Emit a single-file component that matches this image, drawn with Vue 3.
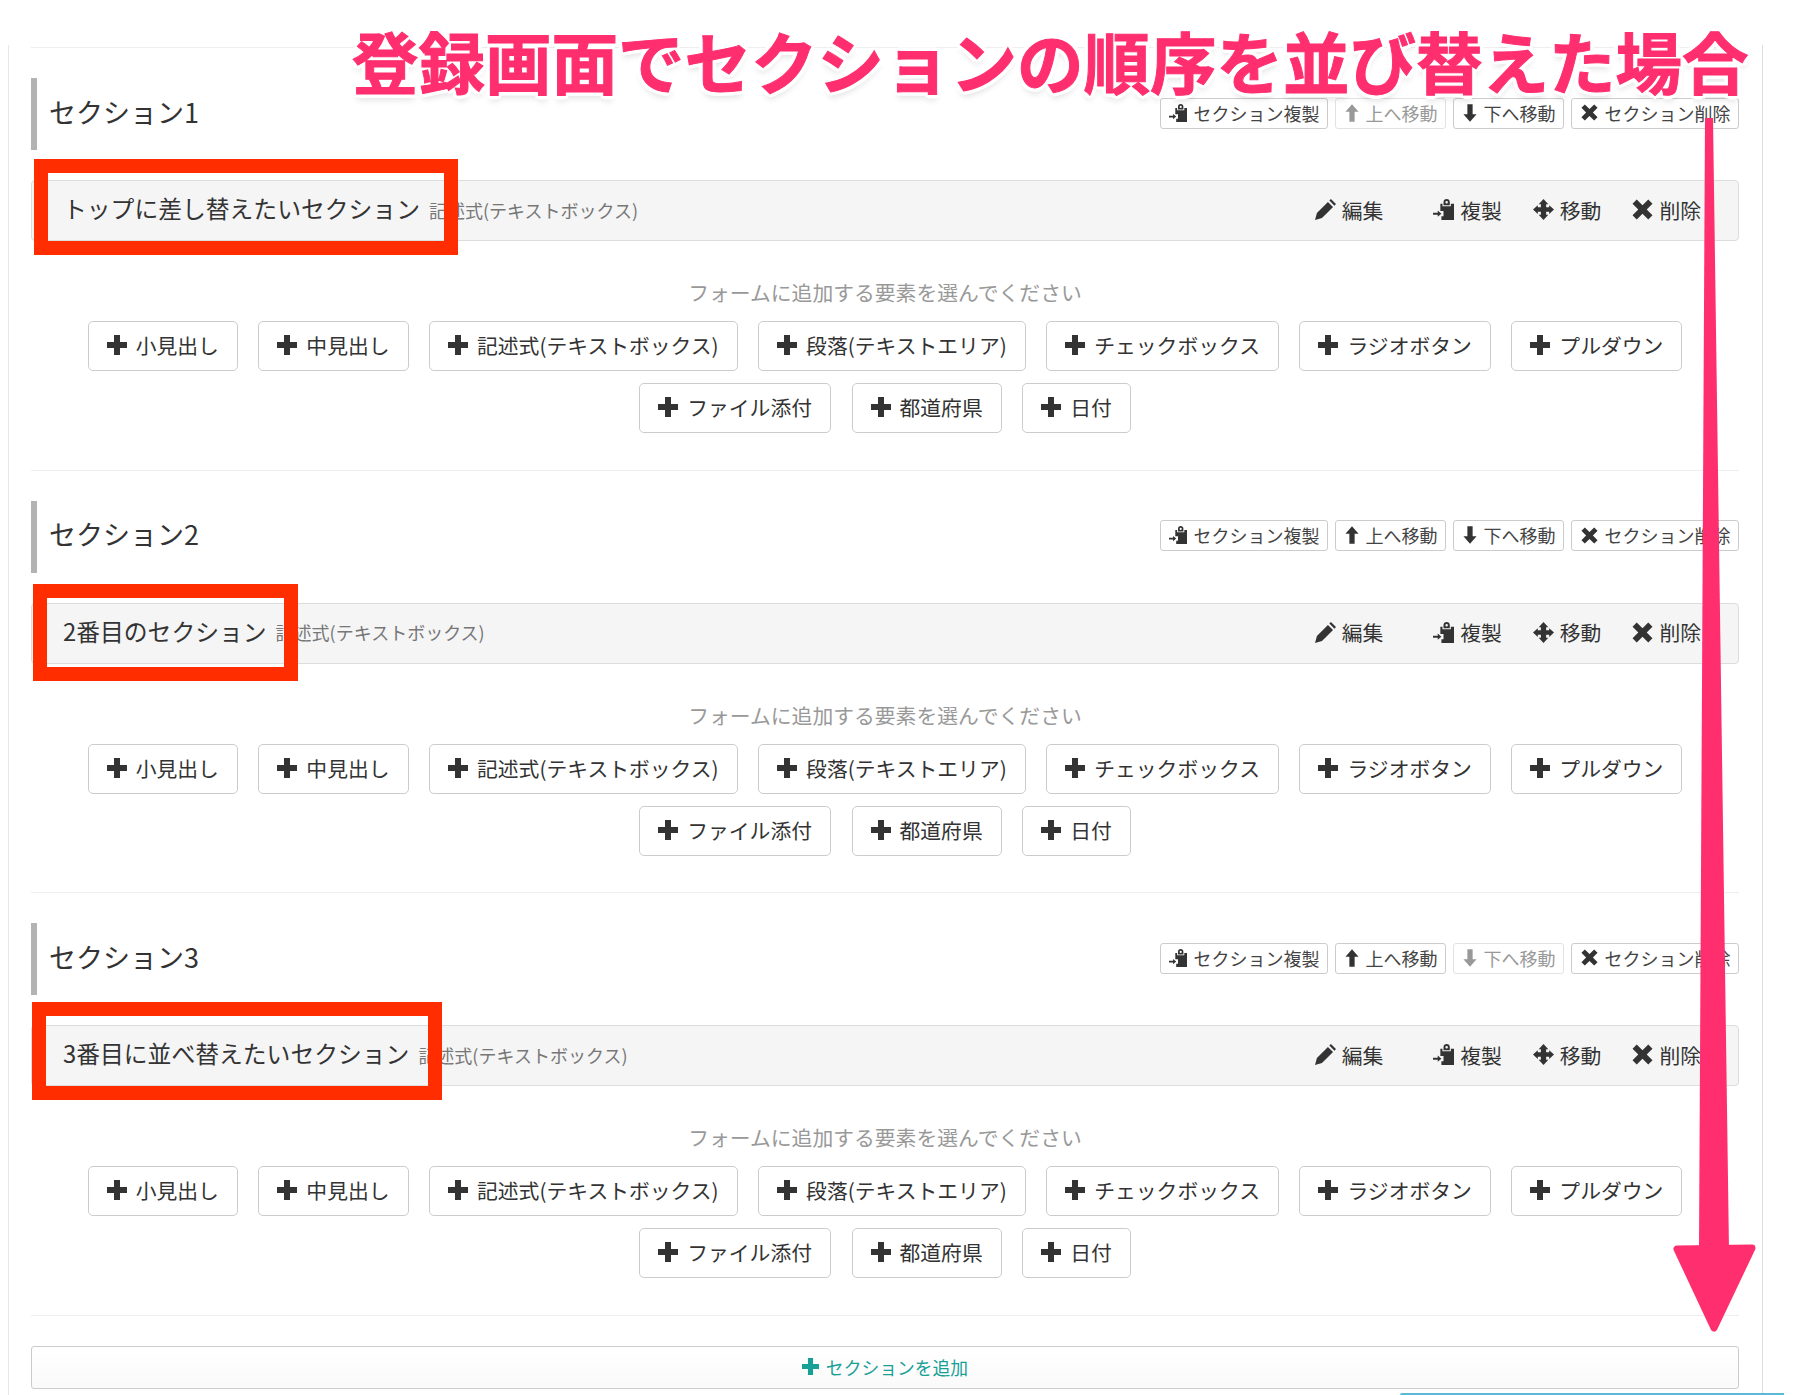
<script setup>
const icons = {
  plus: { box: "0 0 20 20", d: "M7 0h6v7h7v6h-7v7H7v-7H0V7h7z" },
  pencil: { box: "0 0 24 24", d: "M0 24l2.2-8L14.8 3.4l5.8 5.8L8 21.8zM16.4 1.8L18.2 0 24 5.8l-1.8 1.8z" },
  paste: {
    box: "0 0 20 20",
    d: "M7 4.500h2V7h8V4.500h3V20H8v-3.500h2v-5H7zM10 3c0-2 1.200-3 3-3s3 1 3 3v3h-6zM11.800 3.200a1.200 1.200 0 1 0 2.400 0a1.200 1.200 0 1 0-2.400 0zM0 13h4.500v-2l3.500 3-3.500 3v-2H0z",
  },
  move: {
    box: "0 0 24 24",
    d: "M12 0l5.500 6H15v3.500h3.500V7l5.500 5-5.500 5v-2.500H15V18h2.500L12 24l-5.500-6H9v-3.500H5.500V17L0 12l5.500-5v2.500H9V6H6.500z",
  },
  remove: { box: "0 0 20 20", d: "M4.500.5L10 6l5.500-5.500 4 4L14 10l5.500 5.500-4 4L10 14l-5.500 5.500-4-4L6 10 .5 4.500z" },
  up: { box: "0 0 16 20", d: "M8 0l7.500 8.500H11V20H5V8.500H.5z" },
  down: { box: "0 0 16 20", d: "M5 0h6v11.500h4.500L8 20 .5 11.500H5z" },
};

// セクションごとの内容
const sections = [
  { name: "セクション1", field: "トップに差し替えたいセクション", upOff: true, downOff: false },
  { name: "セクション2", field: "2番目のセクション", upOff: false, downOff: false },
  { name: "セクション3", field: "3番目に並べ替えたいセクション", upOff: false, downOff: true },
];

const addButtons = [
  "小見出し",
  "中見出し",
  "記述式(テキストボックス)",
  "段落(テキストエリア)",
  "チェックボックス",
  "ラジオボタン",
  "プルダウン",
  "ファイル添付",
  "都道府県",
  "日付",
];

const rowActions = [
  { label: "編集", icon: "pencil", cls: "edit" },
  { label: "複製", icon: "paste", cls: "" },
  { label: "移動", icon: "move", cls: "" },
  { label: "削除", icon: "remove", cls: "" },
];
</script>

<template>
  <div class="page">
    <div class="panel">
      <section v-for="sec in sections" :key="sec.name" class="section">
        <div class="sec-head">
          <h2 class="sec-title">{{ sec.name }}</h2>
          <div class="sec-btns">
            <button class="mini">
              <svg class="ic ic-paste" :viewBox="icons.paste.box"><path :d="icons.paste.d" fill-rule="evenodd" /></svg>
              セクション複製
            </button>
            <button class="mini" :class="{ off: sec.upOff }">
              <svg class="ic ic-arrow" :viewBox="icons.up.box"><path :d="icons.up.d" /></svg>
              上へ移動
            </button>
            <button class="mini" :class="{ off: sec.downOff }">
              <svg class="ic ic-arrow" :viewBox="icons.down.box"><path :d="icons.down.d" /></svg>
              下へ移動
            </button>
            <button class="mini">
              <svg class="ic ic-x" :viewBox="icons.remove.box"><path :d="icons.remove.d" /></svg>
              セクション削除
            </button>
          </div>
        </div>

        <div class="field-row">
          <span class="field-name">{{ sec.field }}</span>
          <span class="field-type">記述式(テキストボックス)</span>
          <div class="row-actions">
            <span v-for="act in rowActions" :key="act.label" class="act" :class="act.cls">
              <svg class="act-ic" :viewBox="icons[act.icon].box"><path :d="icons[act.icon].d" fill-rule="evenodd" /></svg>
              {{ act.label }}
            </span>
          </div>
        </div>

        <p class="prompt">フォームに追加する要素を選んでください</p>
        <div class="add-btns">
          <button v-for="label in addButtons" :key="label" class="add">
            <svg class="plus" :viewBox="icons.plus.box"><path :d="icons.plus.d" /></svg>
            {{ label }}
          </button>
        </div>
      </section>

      <button class="add-section">
        <svg class="plus-teal" :viewBox="icons.plus.box"><path :d="icons.plus.d" /></svg>
        セクションを追加
      </button>
    </div>

    <!-- 注釈 -->
    <div class="note-title">登録画面でセクションの順序を並び替えた場合</div>
    <div class="red-box box1"></div>
    <div class="red-box box2"></div>
    <div class="red-box box3"></div>
    <svg class="arrow" viewBox="0 0 90 1230">
      <path d="M35 8L43 8L59 1140L29 1140Z" />
      <path class="arrow-head" d="M7 1139L82 1138L44 1218Z" />
    </svg>
    <div class="bottom-strip"></div>
  </div>
</template>

<style>
html,
body {
  margin: 0;
  background: #fff;
}
</style>

<style scoped>
.page {
  position: relative;
  width: 1812px;
  height: 1395px;
  overflow: hidden;
  background: #fff;
  font-family: "Noto Sans CJK JP", "Liberation Sans", sans-serif;
  color: #333;
}

.panel {
  box-sizing: border-box;
  width: 1755px;
  height: 1395px;
  margin-left: 8px;
  padding: 2px 23px 0 22px;
  position: relative;
  top: 45px;
  border-left: 1px solid #e8e8e8;
  border-right: 1px solid #ddd;
}

.section {
  padding: 30px 0 36.5px;
  border-bottom: 1px solid #eee;
}
.section:first-child {
  border-top: 1px solid #eee;
}

.sec-head {
  display: flex;
  align-items: center;
  justify-content: space-between;
  height: 72px;
  border-left: 6px solid #b3b3b3;
  padding-left: 12px;
}
.sec-title {
  margin: 0;
  padding-bottom: 6px;
  font-size: 27px;
  font-weight: 400;
  color: #333;
}
.sec-btns {
  display: flex;
  gap: 7px;
  margin-top: -2px;
}
.mini {
  display: flex;
  align-items: center;
  gap: 7px;
  height: 31px;
  padding: 0 7.5px 1px;
  background: #fff;
  border: 1px solid #ccc;
  border-radius: 3px;
  font: inherit;
  font-size: 18px;
  color: #444;
  white-space: nowrap;
}
.mini.off {
  color: #999;
  border-color: #e2e2e2;
}
.mini .ic {
  fill: #333;
}
.mini.off .ic {
  fill: #999;
}
.ic-paste {
  width: 18px;
  height: 18px;
}
.ic-arrow {
  width: 14px;
  height: 18px;
  margin-left: 1px;
}
.ic-x {
  width: 17px;
  height: 17px;
  margin-left: 1px;
}

.field-row {
  box-sizing: border-box;
  display: flex;
  align-items: center;
  height: 61px;
  margin-top: 30px;
  padding: 0 37px 6px 31px;
  background: #f5f5f5;
  border: 1px solid #ddd;
  border-radius: 4px;
}
.field-name {
  font-size: 23.8px;
  color: #333;
  white-space: nowrap;
}
.field-type {
  margin-left: 9px;
  font-size: 18px;
  color: #777;
  white-space: nowrap;
  position: relative;
  top: 2px;
}
.row-actions {
  display: flex;
  align-items: center;
  gap: 31px;
  margin-left: auto;
  position: relative;
  top: 2px;
}
.act {
  display: flex;
  align-items: center;
  gap: 6px;
  font-size: 20.8px;
  color: #333;
}
.act.edit {
  margin-right: 19px;
}
.act-ic {
  width: 21px;
  height: 21px;
  fill: #333;
}

.prompt {
  margin: 0;
  padding: 31px 0 9px;
  line-height: 40px;
  font-size: 20.8px;
  color: #999;
  text-align: center;
}

.add-btns {
  display: flex;
  flex-wrap: wrap;
  justify-content: center;
  gap: 12px 20.5px;
}
.add {
  display: flex;
  align-items: center;
  gap: 9px;
  height: 50px;
  padding: 0 18px 2px;
  background: #fff;
  border: 1px solid #ccc;
  border-radius: 5px;
  font: inherit;
  font-size: 20.8px;
  color: #333;
  white-space: nowrap;
}
.plus {
  width: 20px;
  height: 20px;
  fill: #333;
}

.add-section {
  box-sizing: border-box;
  display: flex;
  align-items: center;
  justify-content: center;
  gap: 7px;
  width: 100%;
  height: 43px;
  margin-top: 30px;
  padding-bottom: 2px;
  background: linear-gradient(#fff, #fafafa);
  border: 1px solid #ccc;
  border-radius: 3px;
  font: inherit;
  font-size: 17.8px;
  color: #17a096;
}
.plus-teal {
  width: 17px;
  height: 17px;
  fill: #17a096;
}

.note-title {
  position: absolute;
  left: 352px;
  top: 17px;
  font-size: 66.5px;
  line-height: 86px;
  font-weight: 700;
  color: #ff2e6f;
  white-space: nowrap;
  -webkit-text-stroke: 1px #ff2e6f;
  text-shadow:
    4px 0 0 #fff, -4px 0 0 #fff, 0 4px 0 #fff, 0 -4px 0 #fff,
    3px 3px 0 #fff, -3px 3px 0 #fff, 3px -3px 0 #fff, -3px -3px 0 #fff,
    0 6px 6px rgba(0, 0, 0, 0.12);
}

.red-box {
  position: absolute;
  box-sizing: border-box;
  border: 14px solid #ff2d00;
}
.box1 {
  left: 34px;
  top: 159px;
  width: 424px;
  height: 96px;
}
.box2 {
  left: 33px;
  top: 584px;
  width: 265px;
  height: 97px;
}
.box3 {
  left: 32px;
  top: 1002px;
  width: 410px;
  height: 98px;
}

.arrow {
  position: absolute;
  left: 1670px;
  top: 110px;
  width: 90px;
  height: 1230px;
  fill: #ff2e6f;
}
.arrow-head {
  stroke: #ff2e6f;
  stroke-width: 7px;
  stroke-linejoin: round;
}

.bottom-strip {
  position: absolute;
  left: 1400px;
  top: 1393px;
  width: 384px;
  height: 2px;
  background: #5bb9d6;
  border-top-left-radius: 6px;
}
</style>
